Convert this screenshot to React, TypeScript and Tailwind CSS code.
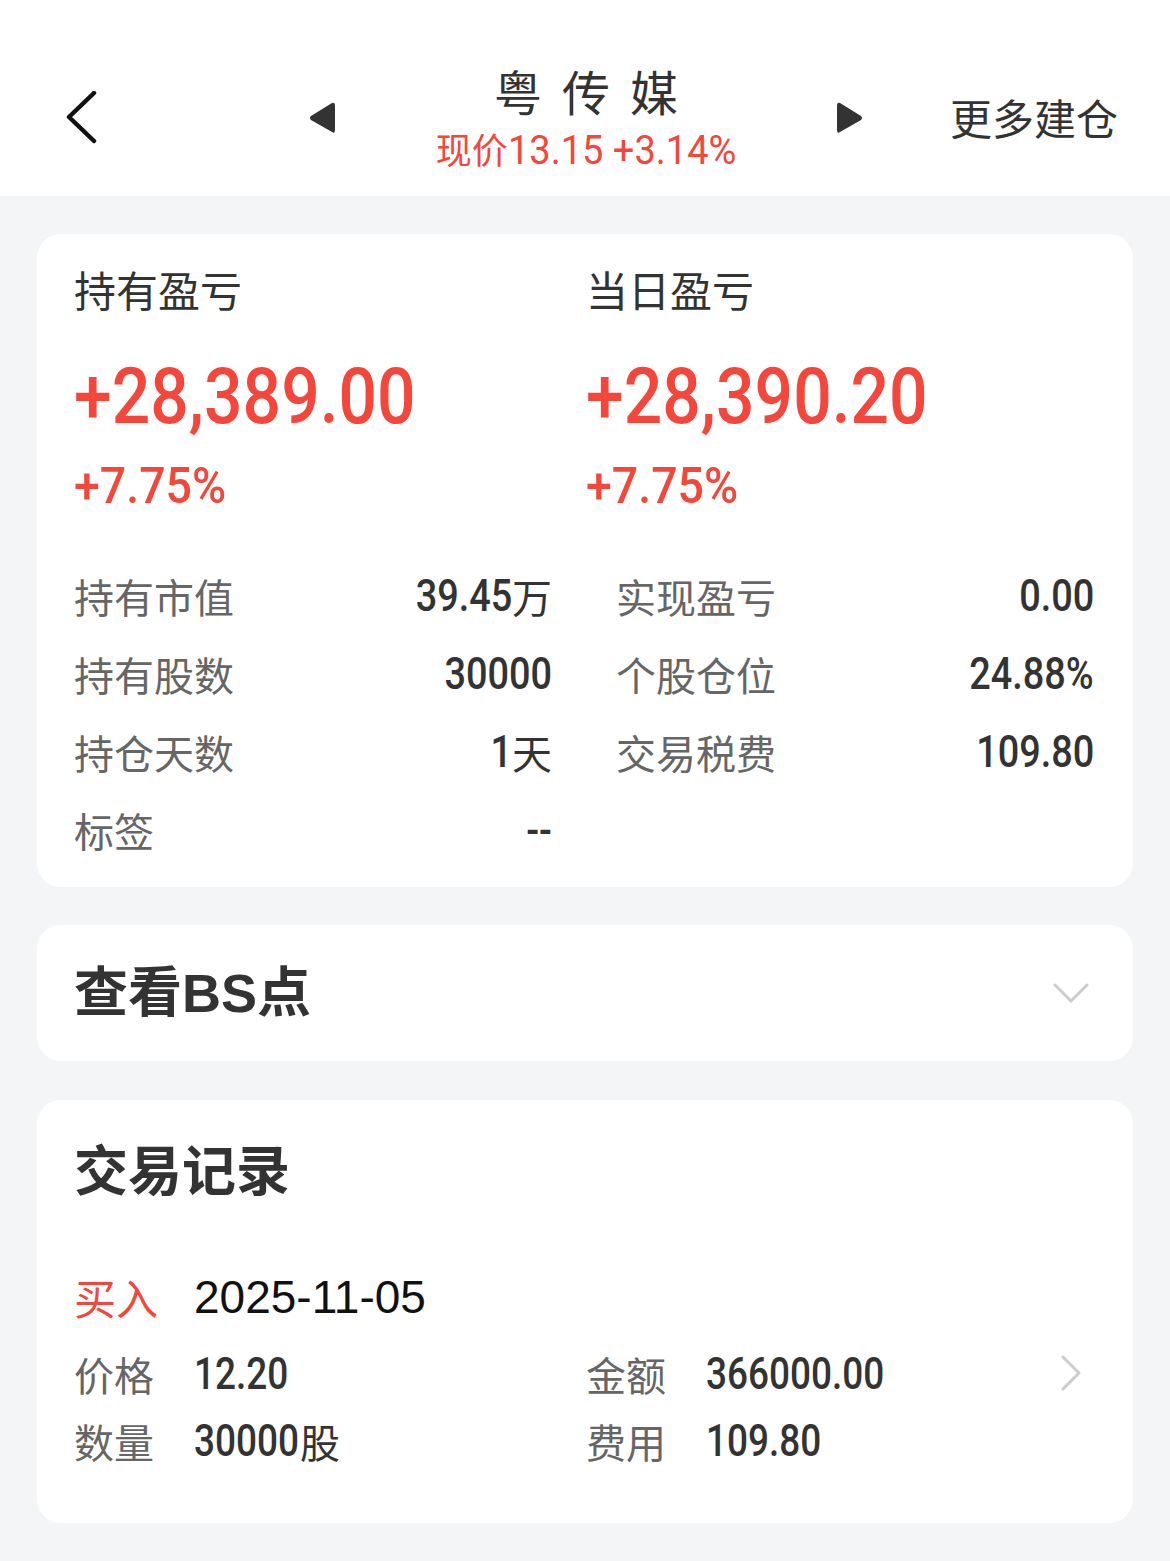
import React from "react";

const CJK = "font-['Noto_Sans_CJK_SC',sans-serif]";
const RED = "text-[#f4463a]";

// condensed DIN-like digits: Roboto squeezed a little
function Num({ children, className = "" }: { children: React.ReactNode; className?: string }) {
  return <span className={`inline-block font-['Roboto','Noto_Sans_CJK_SC',sans-serif] ${className}`}>{children}</span>;
}

function Stat({ label, value, pct }: { label: string; value: string; pct: string }) {
  return (
    <div className="flex flex-col items-start">
      <div className="text-[42px] leading-[42px] text-[#333]">{label}</div>
      <Num className={`mt-[47px] origin-left scale-x-[0.87] text-[78px] font-medium leading-[80px] ${RED}`}>{value}</Num>
      <Num className={`mt-[24px] origin-left scale-x-[0.93] text-[50px] font-medium leading-[50px] ${RED}`}>{pct}</Num>
    </div>
  );
}

function InfoRow({ label, value, unit }: { label: string; value: string; unit?: string }) {
  return (
    <div className="flex h-[78px] items-center justify-between">
      <span className="text-[40px] text-[#666]">{label}</span>
      <span className="flex items-center text-[40px] text-[#333]">
        <Num className="origin-right scale-x-[0.86] text-[44px] font-medium">{value}</Num>
        {unit && <span>{unit}</span>}
      </span>
    </div>
  );
}

function Field({ label, value, unit, shift = "" }: { label: string; value: string; unit?: string; shift?: string }) {
  return (
    <div className="flex h-[50px] items-center">
      <span className="w-[120px] text-[40px] text-[#666]">{label}</span>
      <Num className={`origin-left scale-x-[0.84] text-[44px] font-medium text-[#333] ${shift}`}>{value}</Num>
      {unit && <span className="text-[40px] text-[#333]">{unit}</span>}
    </div>
  );
}

export default function App() {
  return (
    <div className={`${CJK} min-h-[1561px] w-[1170px] bg-[#f4f5f7] pb-[38px]`}>
      {/* Header */}
      <div className="flex h-[196px] items-center bg-white pl-[64px] pt-[38px]">
        <svg width="36" height="56" viewBox="0 0 36 56" className="mt-[4px]">
          <path d="M30 2 L5 26 L30 50" fill="none" stroke="#111" strokeWidth="4.5" strokeLinecap="round" strokeLinejoin="round" />
        </svg>
        <svg width="28" height="34" viewBox="0 0 28 34" className="ml-[208px] mt-[2px]">
          <path d="M24 2 Q27 1 27 5 L27 29 Q27 33 24 31 L3 19 Q1 17 3 15 Z" fill="#333" />
        </svg>
        <div className="flex w-[500px] flex-col items-center">
          <div className="pl-[20px] text-[48px] leading-[52px] tracking-[20px] text-[#333]">粤传媒</div>
          <div className={`mt-[12px] flex items-baseline ${RED}`}>
            <span className="text-[36px] leading-[40px]">现价</span>
            <Num className="origin-left scale-x-[0.95] text-[40px] leading-[40px] -mr-[12px]">13.15 +3.14%</Num>
          </div>
        </div>
        <svg width="28" height="34" viewBox="0 0 28 34" className="mt-[2px]">
          <path d="M4 2 Q1 1 1 5 L1 29 Q1 33 4 31 L25 19 Q27 17 25 15 Z" fill="#333" />
        </svg>
        <div className="ml-[86px] text-[42px] leading-[46px] text-[#333]">更多建仓</div>
      </div>

      {/* 持仓盈亏 */}
      <div className="mx-[37px] mt-[38px] rounded-[24px] bg-white pl-[37px] pr-[39px] pt-[34px] pb-[18px]">
        <div className="grid grid-cols-[512px_1fr]">
          <Stat label="持有盈亏" value="+28,389.00" pct="+7.75%" />
          <Stat label="当日盈亏" value="+28,390.20" pct="+7.75%" />
        </div>
        <div className="mt-[46px] grid grid-cols-2 gap-x-[64px]">
          <div className="flex flex-col">
            <InfoRow label="持有市值" value="39.45" unit="万" />
            <InfoRow label="持有股数" value="30000" />
            <InfoRow label="持仓天数" value="1" unit="天" />
            <InfoRow label="标签" value="--" />
          </div>
          <div className="flex flex-col">
            <InfoRow label="实现盈亏" value="0.00" />
            <InfoRow label="个股仓位" value="24.88%" />
            <InfoRow label="交易税费" value="109.80" />
          </div>
        </div>
      </div>

      {/* 查看BS点 */}
      <div className="mx-[37px] mt-[38px] flex h-[136px] items-center justify-between rounded-[24px] bg-white pl-[37px] pr-[42px]">
        <span className="font-['Liberation_Sans','Noto_Sans_CJK_SC',sans-serif] text-[54px] font-bold text-[#333]">查看BS点</span>
        <svg width="40" height="24" viewBox="0 0 40 24">
          <path d="M4 4 L20 20 L36 4" fill="none" stroke="#ccc" strokeWidth="3" strokeLinecap="round" strokeLinejoin="round" />
        </svg>
      </div>

      {/* 交易记录 */}
      <div className="mx-[37px] mt-[39px] rounded-[24px] bg-white pl-[37px] pr-[39px] pt-[38px] pb-[57px]">
        <div className="text-[54px] font-bold leading-[60px] text-[#333]">交易记录</div>
        <div className="mt-[74px] flex h-[50px] items-center">
          <span className={`w-[120px] text-[42px] leading-[50px] ${RED}`}>买入</span>
          <span className="font-['Liberation_Sans',sans-serif] text-[46px] leading-[50px] text-[#111]">2025-11-05</span>
        </div>
        <div className="mt-[27px] flex items-start">
          <div className="grid flex-1 grid-cols-[512px_1fr] gap-y-[17px]">
            <Field label="价格" value="12.20" />
            <Field label="金额" value="366000.00" />
            <Field label="数量" value="30000" unit="股" shift="-mr-[19px]" />
            <Field label="费用" value="109.80" />
          </div>
          <svg width="26" height="40" viewBox="0 0 26 40" className="mr-[10px] mt-[4px]">
            <path d="M5 4 L21 20 L5 36" fill="none" stroke="#ccc" strokeWidth="3" strokeLinecap="round" strokeLinejoin="round" />
          </svg>
        </div>
      </div>
    </div>
  );
}
